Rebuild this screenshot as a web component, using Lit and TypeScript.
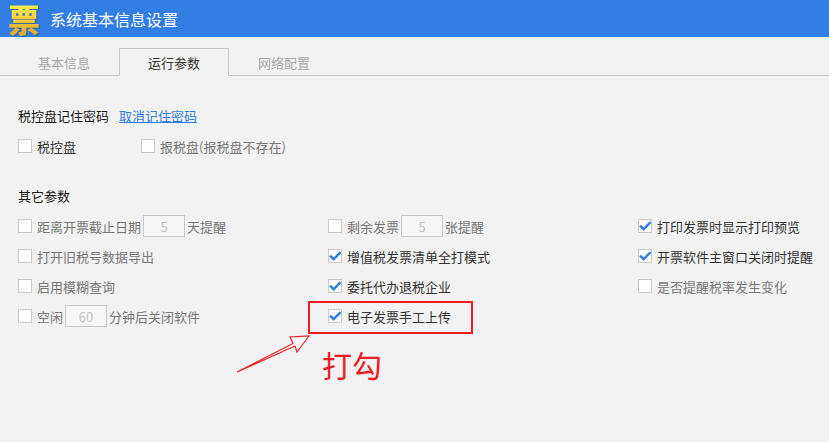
import { LitElement, html, css } from "lit";
import { customElement } from "lit/decorators.js";

type Row = { label?: string; pre?: string; val?: string; post?: string; on?: boolean };

const cols: Row[][] = [
  [
    { pre: "距离开票截止日期", val: "5", post: "天提醒" },
    { label: "打开旧税号数据导出" },
    { label: "启用模糊查询" },
    { pre: "空闲", val: "60", post: "分钟后关闭软件" },
  ],
  [
    { pre: "剩余发票", val: "5", post: "张提醒" },
    { label: "增值税发票清单全打模式", on: true },
    { label: "委托代办退税企业", on: true },
    { label: "电子发票手工上传", on: true },
  ],
  [
    { label: "打印发票时显示打印预览", on: true },
    { label: "开票软件主窗口关闭时提醒", on: true },
    { label: "是否提醒税率发生变化" },
  ],
];

@customElement("app-root")
export class AppRoot extends LitElement {
  static styles = css`
    :host {
      display: block;
      position: relative;
      width: 829px;
      height: 442px;
      overflow: hidden;
      background: #f2f2f2;
      font-family: "Noto Sans CJK SC", "Liberation Sans", sans-serif;
      font-size: 13px;
      color: #333;
    }
    .header {
      height: 37px;
      background: #317de3;
      display: flex;
      align-items: center;
      padding-left: 7px;
      gap: 9px;
      color: #fff;
      font-size: 16px;
    }
    .logo {
      width: 34px;
      height: 37px;
      flex: none;
      text-align: center;
      font-size: 32px;
      font-weight: 900;
      line-height: 37px;
      background: linear-gradient(#ffe94a 20%, #e2ad2a 85%);
      -webkit-background-clip: text;
      background-clip: text;
      color: transparent;
      filter: drop-shadow(1px 1px 0 rgba(60, 60, 60, 0.35));
    }
    .tabs {
      display: flex;
      margin-top: 11px;
      height: 28px;
      box-sizing: border-box;
      border-bottom: 1px solid #c9c9c9;
      padding-left: 9px;
    }
    .tab {
      width: 110px;
      height: 28px;
      box-sizing: border-box;
      display: flex;
      align-items: center;
      justify-content: center;
      color: #a8a8a8;
    }
    .tab.active {
      color: #333;
      border: 1px solid #c9c9c9;
      border-bottom: 1px solid #f2f2f2;
    }
    .content { padding: 30px 18px 0; }
    .title {
      height: 19px;
      line-height: 19px;
      color: #1a1a1a;
      display: flex;
      gap: 10px;
    }
    .link {
      color: #317de3;
      text-decoration: underline;
    }
    .top-row {
      display: flex;
      margin-top: 11px;
      height: 20px;
      align-items: center;
    }
    .top-row .item { width: 123px; color: #1a1a1a; height: 20px; }
    .top-row .item.dim { color: #777; }
    .other { margin-top: 30px; }
    .grid {
      display: grid;
      grid-template-columns: 310px 310px 1fr;
      margin-top: 6px;
    }
    .item {
      display: flex;
      align-items: center;
      height: 30px;
      color: #777;
      white-space: nowrap;
    }
    .item.on { color: #333; }
    .box {
      width: 14px;
      height: 14px;
      box-sizing: border-box;
      border: 1px solid #c9c9c9;
      background: #fff;
      margin-right: 5px;
      flex: none;
      position: relative;
    }
    .box svg {
      position: absolute;
      left: 0;
      top: 0;
      width: 12px;
      height: 12px;
      overflow: visible;
    }
    .field {
      width: 42px;
      height: 22px;
      box-sizing: border-box;
      border: 1px solid #c9c9c9;
      background: #f6f6f6;
      color: #c4c4c4;
      display: flex;
      align-items: center;
      justify-content: center;
      margin: 0 2px 0 2px;
    }
    .mark {
      position: absolute;
      left: 308px;
      top: 301px;
      width: 165px;
      height: 33px;
      box-sizing: border-box;
      border: 2px solid #ed1c24;
      pointer-events: none;
    }
    .arrow {
      position: absolute;
      left: 230px;
      top: 330px;
      width: 90px;
      height: 50px;
    }
    .note {
      position: absolute;
      left: 322px;
      top: 343px;
      font-size: 30px;
      line-height: 42px;
      color: #ed1c24;
    }
  `;

  private box(on?: boolean) {
    return html`<span class="box"
      >${on
        ? html`<svg viewBox="0 0 12 12">
            <path d="M1 5.6 L4.6 9.2 L11.6 2.2" fill="none" stroke="#317de3" stroke-width="2.4" />
          </svg>`
        : ""}</span
    >`;
  }

  private item(r: Row) {
    return html`<div class="item ${r.on ? "on" : ""}">
      ${this.box(r.on)}
      ${r.label
        ? html`<span>${r.label}</span>`
        : html`<span>${r.pre}</span><span class="field">${r.val}</span><span>${r.post}</span>`}
    </div>`;
  }

  render() {
    const rows = [0, 1, 2, 3];
    return html`
      <div class="header">
        <span class="logo">票</span>
        <span>系统基本信息设置</span>
      </div>
      <div class="tabs">
        <div class="tab">基本信息</div>
        <div class="tab active">运行参数</div>
        <div class="tab">网络配置</div>
      </div>
      <div class="content">
        <div class="title"><span>税控盘记住密码</span><span class="link">取消记住密码</span></div>
        <div class="top-row">
          <div class="item on">${this.box()}<span>税控盘</span></div>
          <div class="item dim">${this.box()}<span>报税盘(报税盘不存在)</span></div>
        </div>
        <div class="title other">其它参数</div>
        <div class="grid">
          ${rows.map((i) =>
            cols.map((c) => (c[i] ? this.item(c[i]) : html`<div></div>`))
          )}
        </div>
      </div>
      <div class="mark"></div>
      <svg class="arrow" viewBox="230 330 90 50">
        <path
          d="M237 372 L293 343.5 L290 337 L309 336 L297 352 L295 346 Z"
          fill="#fff"
          fill-opacity="0.6"
          stroke="#ed1c24"
          stroke-width="1.2"
        />
      </svg>
      <div class="note">打勾</div>
    `;
  }
}
